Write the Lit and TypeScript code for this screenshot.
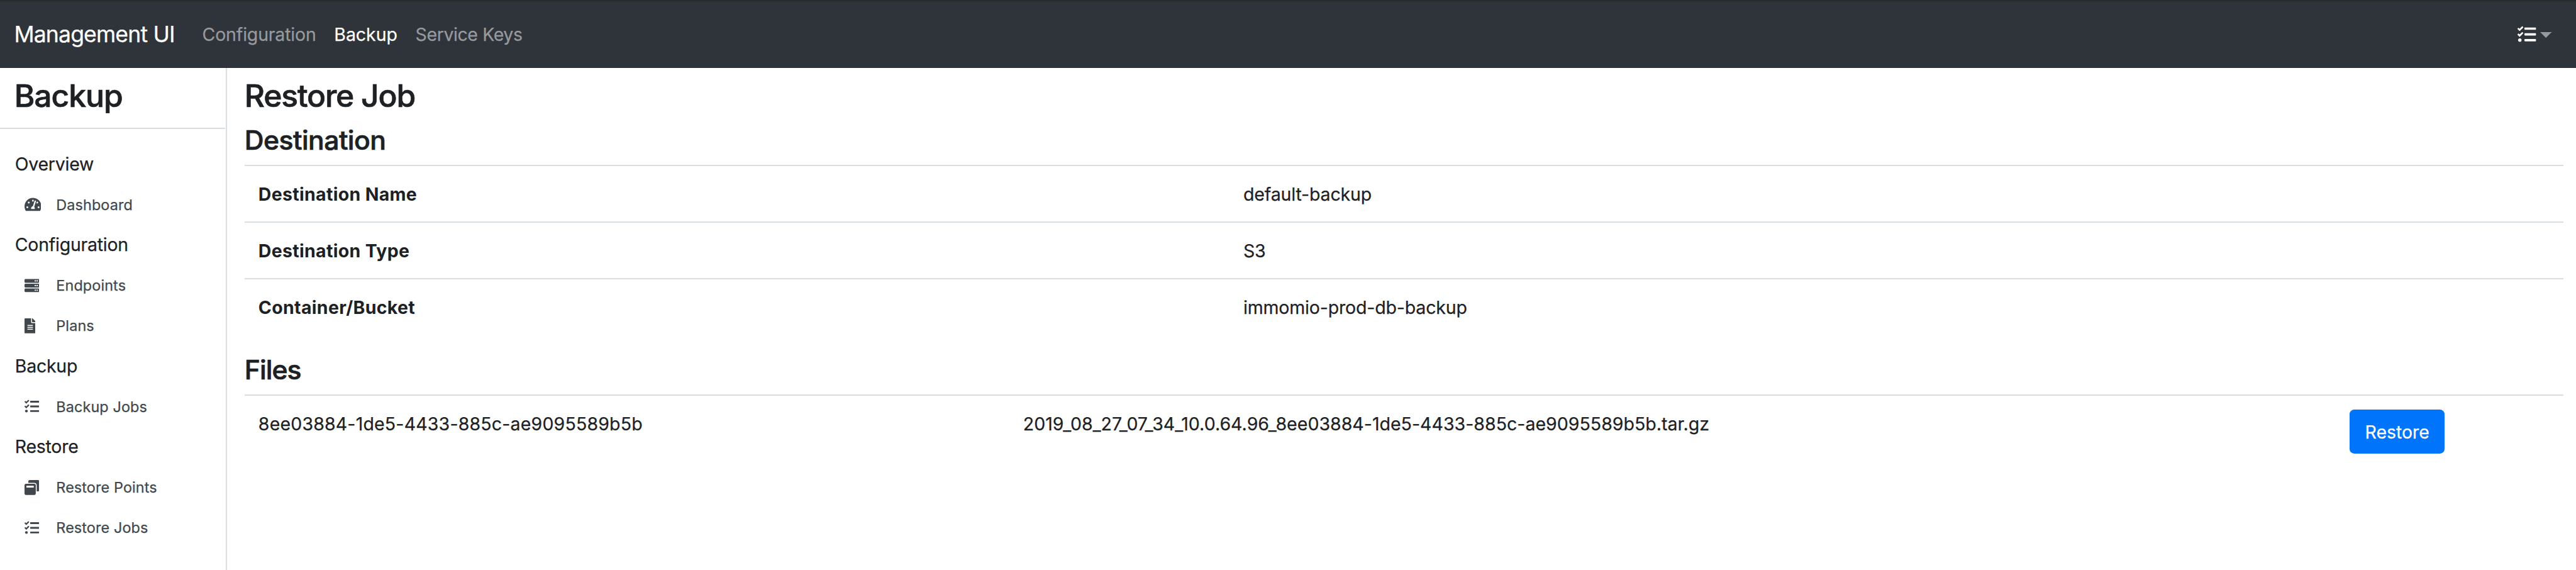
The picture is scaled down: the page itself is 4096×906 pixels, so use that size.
import { LitElement, html, css, svg, TemplateResult } from "lit";
import { customElement, property } from "lit/decorators.js";
import { classMap } from "lit/directives/class-map.js";

interface Glyph {
  width: number;
  path: string;
}

const GLYPHS: Record<string, Glyph> = {
  gauge: {
    width: 576,
    path: "M288 32C128.94 32 0 160.94 0 320c0 52.8 14.25 102.26 39.06 144.8 5.61 9.62 16.3 15.2 27.44 15.2h443c11.14 0 21.83-5.58 27.44-15.2C561.75 422.26 576 372.8 576 320c0-159.06-128.94-288-288-288zm0 64c14.71 0 26.58 10.13 30.32 23.65-1.11 2.26-2.64 4.23-3.45 6.67l-9.22 27.67c-5.13 3.49-10.97 6.01-17.64 6.01-17.67 0-32-14.33-32-32S270.33 96 288 96zM96 384c-17.67 0-32-14.33-32-32s14.33-32 32-32 32 14.33 32 32-14.33 32-32 32zm48-160c-17.67 0-32-14.33-32-32s14.33-32 32-32 32 14.33 32 32-14.33 32-32 32zm246.77-72.41l-61.33 184C343.13 347.33 352 364.54 352 384c0 11.72-3.38 22.55-8.88 32H232.88c-5.5-9.45-8.88-20.28-8.88-32 0-33.94 26.5-61.43 59.9-63.59l61.34-184.01c4.17-12.56 17.73-19.45 30.36-15.17 12.57 4.19 19.35 17.79 15.17 30.36zm14.66 57.2l15.52-46.55c3.47-1.29 7.13-2.23 11.05-2.23 17.67 0 32 14.33 32 32s-14.33 32-32 32c-11.38-.01-20.89-6.28-26.57-15.22zM480 384c-17.67 0-32-14.33-32-32s14.33-32 32-32 32 14.33 32 32-14.33 32-32 32z",
  },
  server: {
    width: 512,
    path: "M480 160H32c-17.673 0-32-14.327-32-32V64c0-17.673 14.327-32 32-32h448c17.673 0 32 14.327 32 32v64c0 17.673-14.327 32-32 32zm-48-88c-13.255 0-24 10.745-24 24s10.745 24 24 24 24-10.745 24-24-10.745-24-24-24zm-64 0c-13.255 0-24 10.745-24 24s10.745 24 24 24 24-10.745 24-24-10.745-24-24-24zm112 248H32c-17.673 0-32-14.327-32-32v-64c0-17.673 14.327-32 32-32h448c17.673 0 32 14.327 32 32v64c0 17.673-14.327 32-32 32zm-48-88c-13.255 0-24 10.745-24 24s10.745 24 24 24 24-10.745 24-24-10.745-24-24-24zm-64 0c-13.255 0-24 10.745-24 24s10.745 24 24 24 24-10.745 24-24-10.745-24-24-24zm112 248H32c-17.673 0-32-14.327-32-32v-64c0-17.673 14.327-32 32-32h448c17.673 0 32 14.327 32 32v64c0 17.673-14.327 32-32 32zm-48-88c-13.255 0-24 10.745-24 24s10.745 24 24 24 24-10.745 24-24-10.745-24-24-24zm-64 0c-13.255 0-24 10.745-24 24s10.745 24 24 24 24-10.745 24-24-10.745-24-24-24z",
  },
  file: {
    width: 384,
    path: "M224 136V0H24C10.7 0 0 10.7 0 24v464c0 13.3 10.7 24 24 24h336c13.3 0 24-10.7 24-24V160H248c-13.2 0-24-10.8-24-24zm64 236c0 6.6-5.4 12-12 12H108c-6.6 0-12-5.4-12-12v-8c0-6.6 5.4-12 12-12h168c6.6 0 12 5.4 12 12v8zm0-64c0 6.6-5.4 12-12 12H108c-6.6 0-12-5.4-12-12v-8c0-6.6 5.4-12 12-12h168c6.6 0 12 5.4 12 12v8zm0-72v8c0 6.6-5.4 12-12 12H108c-6.6 0-12-5.4-12-12v-8c0-6.6 5.4-12 12-12h168c6.6 0 12 5.4 12 12zm96-114.1v6.1H256V0h6.1c6.4 0 12.5 2.5 17 7l97.9 98c4.5 4.5 7 10.6 7 16.9z",
  },
  tasks: {
    width: 512,
    path: "M139.61 35.5a12 12 0 0 0-17 0L58.93 98.81l-22.7-22.12a12 12 0 0 0-17 0L3.53 92.41a12 12 0 0 0 0 17l47.59 47.4a12.78 12.78 0 0 0 17.61 0l15.59-15.62L156.52 69a12.09 12.09 0 0 0 .09-17zm0 159.19a12 12 0 0 0-17 0l-63.68 63.72-22.7-22.1a12 12 0 0 0-17 0L3.53 252a12 12 0 0 0 0 17L51 316.5a12.77 12.77 0 0 0 17.6 0l15.7-15.69 72.2-72.22a12 12 0 0 0 .09-16.9zM64 368c-26.49 0-48.59 21.5-48.59 48S37.53 464 64 464a48 48 0 0 0 0-96zm432 16H208a16 16 0 0 0-16 16v32a16 16 0 0 0 16 16h288a16 16 0 0 0 16-16v-32a16 16 0 0 0-16-16zm0-320H208a16 16 0 0 0-16 16v32a16 16 0 0 0 16 16h288a16 16 0 0 0 16-16V80a16 16 0 0 0-16-16zm0 160H208a16 16 0 0 0-16 16v32a16 16 0 0 0 16 16h288a16 16 0 0 0 16-16v-32a16 16 0 0 0-16-16z",
  },
  windows: {
    width: 512,
    path: "M512 48v288c0 26.5-21.5 48-48 48h-48V176c0-44.1-35.9-80-80-80H128V48c0-26.5 21.5-48 48-48h288c26.5 0 48 21.5 48 48zM384 176v288c0 26.5-21.5 48-48 48H48c-26.5 0-48-21.5-48-48V176c0-26.5 21.5-48 48-48h288c26.5 0 48 21.5 48 48zm-68 28c0-6.6-5.4-12-12-12H76c-6.6 0-12 5.4-12 12v52h252v-52z",
  },
};

@customElement("ui-icon")
class UiIcon extends LitElement {
  @property() name = "tasks";

  static styles = css`
    :host {
      display: inline-flex;
      height: 1em;
    }
    .glyph {
      display: block;
      height: 1em;
      width: auto;
      fill: currentColor;
    }
  `;

  render() {
    const g = GLYPHS[this.name];
    return html`<svg class="glyph" viewBox="0 0 ${g.width} 512" aria-hidden="true">
      ${svg`<path d=${g.path}></path>`}
    </svg>`;
  }
}

interface NavLink {
  label: string;
  tone: string;
}

const NAV: NavLink[] = [
  { label: "Configuration", tone: "first" },
  { label: "Backup", tone: "active" },
  { label: "Service Keys", tone: "last" },
];

@customElement("top-bar")
class TopBar extends LitElement {
  static styles = css`
    :host {
      display: flex;
      align-items: center;
      box-sizing: border-box;
      height: calc(118 * var(--u));
      padding: 2px calc(42 * var(--u)) 0 calc(24.4 * var(--u));
      background: linear-gradient(#2e2f31 0 1px, #222427 1px 2px, #2f333a 2px calc(100% - 1px), #2d2731 calc(100% - 1px));
      color: #fff;
    }
    .brand {
      font-size: calc(38.8 * var(--u));
      letter-spacing: -0.0236em;
      margin-right: calc(47.8 * var(--u));
    }
    .links {
      display: flex;
      gap: calc(31.3 * var(--u));
      padding-top: calc(1.4 * var(--u));
      font-size: calc(31.04 * var(--u));
    }
    .link {
      color: #97999c;
      letter-spacing: -0.0056em;
    }
    .link.active {
      color: #fff;
      letter-spacing: -0.001em;
    }
    .link.last {
      letter-spacing: -0.0139em;
    }
    .menu {
      display: flex;
      align-items: center;
      gap: calc(7 * var(--u));
      margin-left: auto;
      font-size: calc(32 * var(--u));
    }
    .caret {
      width: calc(20 * var(--u));
      height: calc(10 * var(--u));
      fill: #97999c;
    }
  `;

  render() {
    return html`
      <span class="brand">Management UI</span>
      <nav class="links">
        ${NAV.map((l) => html`<span class=${classMap({ link: true, [l.tone]: true })}>${l.label}</span>`)}
      </nav>
      <div class="menu">
        <ui-icon name="tasks"></ui-icon>
        <svg class="caret" viewBox="0 0 20 10"><path d="M0 0H20L10 10Z"></path></svg>
      </div>
    `;
  }
}

interface SideEntry {
  label: string;
  icon?: string;
}

const SIDE: SideEntry[] = [
  { label: "Overview" },
  { label: "Dashboard", icon: "gauge" },
  { label: "Configuration" },
  { label: "Endpoints", icon: "server" },
  { label: "Plans", icon: "file" },
  { label: "Backup" },
  { label: "Backup Jobs", icon: "tasks" },
  { label: "Restore" },
  { label: "Restore Points", icon: "windows" },
  { label: "Restore Jobs", icon: "tasks" },
];

@customElement("side-bar")
class SideBar extends LitElement {
  static styles = css`
    :host {
      display: block;
      box-sizing: border-box;
      width: calc(394 * var(--u));
      border-right: 2px solid #d9dee2;
    }
    .title {
      margin: 0 calc(2 * var(--u)) 0 0;
      box-sizing: border-box;
      height: calc(106 * var(--u));
      border-bottom: 2px solid #d9dee2;
      padding-left: calc(24.8 * var(--u));
      font-size: calc(54.3 * var(--u));
      font-weight: 500;
      -webkit-text-stroke-width: 0.7px;
      letter-spacing: -0.0214em;
      line-height: calc(96.4 * var(--u));
    }
    .list {
      padding-top: calc(25.7 * var(--u));
    }
    .section,
    .entry {
      display: flex;
      align-items: center;
      height: calc(70 * var(--u));
    }
    .section {
      padding-left: calc(25.9 * var(--u));
      font-size: calc(31.04 * var(--u));
      letter-spacing: -0.008em;
    }
    .entry {
      padding-left: calc(42 * var(--u));
      color: #40474d;
    }
    .icon {
      width: calc(55.4 * var(--u));
      font-size: calc(26 * var(--u));
    }
    .label {
      font-size: calc(25.5 * var(--u));
      letter-spacing: 0.005em;
    }
  `;

  render() {
    return html`
      <h3 class="title">Backup</h3>
      <div class="list">
        ${SIDE.map((e) =>
          e.icon
            ? html`<div class="entry">
                <ui-icon class="icon" name=${e.icon}></ui-icon><span class="label">${e.label}</span>
              </div>`
            : html`<div class="section">${e.label}</div>`
        )}
      </div>
    `;
  }
}

const DETAILS: [string, string][] = [
  ["Destination Name", "default-backup"],
  ["Destination Type", "S3"],
  ["Container/Bucket", "immomio-prod-db-backup"],
];

@customElement("app-root")
class AppRoot extends LitElement {
  static styles = css`
    :host {
      --u: 0.91715px;
      display: flex;
      flex-direction: column;
      height: 100vh;
      overflow: hidden;
      background: #fff;
      color: #1d2124;
      font-family: Inter, "Liberation Sans", sans-serif;
      -webkit-text-stroke-width: 0.25px;
      line-height: 1.5;
      white-space: nowrap;
    }
    .body {
      display: flex;
      flex: 1;
    }
    .main {
      flex: 1;
      padding: 0 calc(22 * var(--u)) 0 calc(30 * var(--u));
    }
    h3,
    h4 {
      margin: 0;
      font-weight: 500;
      -webkit-text-stroke-width: 0.7px;
    }
    h3 {
      font-size: calc(54.3 * var(--u));
      letter-spacing: -0.0245em;
      line-height: calc(96.4 * var(--u));
    }
    h4 {
      font-size: calc(46.56 * var(--u));
      letter-spacing: -0.0135em;
      line-height: calc(57.4 * var(--u));
      padding-bottom: calc(14.2 * var(--u));
    }
    .files-title {
      padding-top: calc(32.4 * var(--u));
      letter-spacing: -0.0235em;
    }
    .row {
      display: grid;
      box-sizing: border-box;
      border-top: 2px solid #d9dee2;
      padding: calc(24.7 * var(--u)) 0 0 calc(24 * var(--u));
      font-size: calc(31.04 * var(--u));
      line-height: calc(48 * var(--u));
    }
    .detail {
      height: calc(98 * var(--u));
      grid-template-columns: calc(1707.6 * var(--u)) 1fr;
    }
    .key {
      font-weight: 700;
      letter-spacing: 0.0117em;
      -webkit-text-stroke-width: 0;
    }
    .value {
      letter-spacing: -0.0046em;
    }
    .file {
      grid-template-columns: calc(1325.8 * var(--u)) calc(2300.2 * var(--u)) 1fr;
      align-items: start;
    }
    .id {
      letter-spacing: 0.0072em;
    }
    .archive {
      letter-spacing: 0.0017em;
    }
    .restore {
      justify-self: start;
      box-sizing: border-box;
      width: calc(164 * var(--u));
      height: calc(76 * var(--u));
      margin: calc(-1.2 * var(--u)) 0 0;
      padding: calc(2.4 * var(--u)) 0 0;
      border: 0;
      border-radius: calc(8 * var(--u));
      background: #0074fa;
      color: #fff;
      font: inherit;
      letter-spacing: -0.0014em;
    }
  `;

  render(): TemplateResult {
    return html`
      <top-bar></top-bar>
      <div class="body">
        <side-bar></side-bar>
        <main class="main">
          <h3>Restore Job</h3>
          <h4>Destination</h4>
          ${DETAILS.map(
            ([k, v]) => html`<div class="row detail"><span class="key">${k}</span><span class="value">${v}</span></div>`
          )}
          <h4 class="files-title">Files</h4>
          <div class="row file">
            <span class="id">8ee03884-1de5-4433-885c-ae9095589b5b</span>
            <span class="archive">2019_08_27_07_34_10.0.64.96_8ee03884-1de5-4433-885c-ae9095589b5b.tar.gz</span>
            <button class="restore">Restore</button>
          </div>
        </main>
      </div>
    `;
  }
}
